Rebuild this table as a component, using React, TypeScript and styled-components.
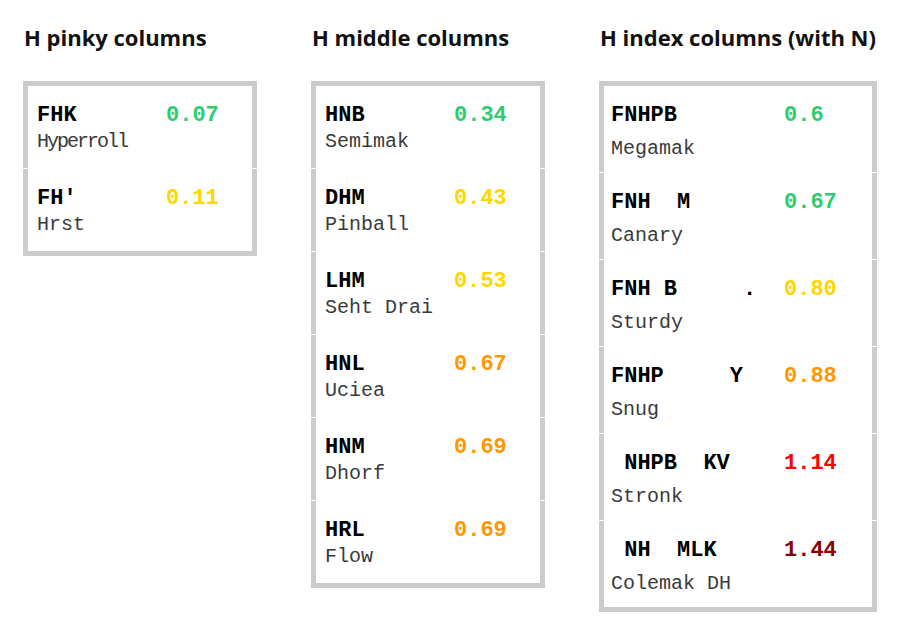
import React from "react";
import styled, { createGlobalStyle } from "styled-components";

const GlobalStyle = createGlobalStyle`
  html, body {
    margin: 0;
    padding: 0;
    background: #fff;
  }
`;

const Page = styled.div`
  display: flex;
  align-items: flex-start;
  padding: 22px 0 0 23px;
`;

const Column = styled.section`
  width: 288px;
  flex-shrink: 0;
`;

const Heading = styled.h2`
  margin: 0 0 29px 1px;
  font-family: "Open Sans", "Noto Sans", sans-serif;
  font-size: 22px;
  font-weight: 700;
  line-height: 30px;
  color: #111;
  white-space: nowrap;
`;

const Card = styled.div<{ $width: number }>`
  width: ${(p) => p.$width}px;
  box-sizing: border-box;
  display: flex;
  flex-direction: column;
  gap: 1px;
  background: #fff;
`;

const Row = styled.div<{ $padLeft: number; $tall: boolean }>`
  border-left: 5px solid #ccc;
  border-right: 5px solid #ccc;
  padding: 18px 0 ${(p) => (p.$tall ? 12 : 15)}px ${(p) => p.$padLeft}px;

  &:first-child {
    border-top: 5px solid #ccc;
  }
  &:last-child {
    border-bottom: 5px solid #ccc;
  }
`;

const Line = styled.div`
  display: flex;
  align-items: baseline;
  height: 24px;
`;

const Code = styled.span<{ $width: number }>`
  width: ${(p) => p.$width}px;
  flex-shrink: 0;
  white-space: pre;
  font-family: "Liberation Mono", "DejaVu Sans Mono", monospace;
  font-size: 22px;
  font-weight: 700;
  line-height: 24px;
  color: #000;
`;

const Score = styled.span<{ $color: string }>`
  font-family: "Liberation Mono", "DejaVu Sans Mono", monospace;
  font-size: 22px;
  font-weight: 700;
  line-height: 24px;
  color: ${(p) => p.$color};
`;

const Name = styled.div<{ $gap: number; $squeeze?: boolean }>`
  margin-top: ${(p) => p.$gap}px;
  font-family: "Liberation Mono", "DejaVu Sans Mono", monospace;
  font-size: 20px;
  font-weight: 400;
  line-height: 22px;
  color: #3a3a3a;
  letter-spacing: ${(p) => (p.$squeeze ? "-2px" : "0")};
  white-space: pre;
`;

const GREEN = "#2ecc71";
const YELLOW = "#ffd700";
const ORANGE = "#ff9800";
const RED = "#ff0000";
const DARK_RED = "#8b0000";

type Layout = { code: string; score: string; color: string; name: string; squeeze?: boolean };

type Group = {
  title: string;
  width: number;
  codeWidth: number;
  padLeft: number;
  tall: boolean;
  layouts: Layout[];
};

const groups: Group[] = [
  {
    title: "H pinky columns",
    width: 234,
    codeWidth: 129,
    padLeft: 9,
    tall: false,
    layouts: [
      { code: "FHK", score: "0.07", color: GREEN, name: "Hyperroll", squeeze: true },
      { code: "FH'", score: "0.11", color: YELLOW, name: "Hrst" },
    ],
  },
  {
    title: "H middle columns",
    width: 234,
    codeWidth: 129,
    padLeft: 9,
    tall: false,
    layouts: [
      { code: "HNB", score: "0.34", color: GREEN, name: "Semimak" },
      { code: "DHM", score: "0.43", color: YELLOW, name: "Pinball" },
      { code: "LHM", score: "0.53", color: YELLOW, name: "Seht Drai" },
      { code: "HNL", score: "0.67", color: ORANGE, name: "Uciea" },
      { code: "HNM", score: "0.69", color: ORANGE, name: "Dhorf" },
      { code: "HRL", score: "0.69", color: ORANGE, name: "Flow" },
    ],
  },
  {
    title: "H index columns (with N)",
    width: 278,
    codeWidth: 173,
    padLeft: 7,
    tall: true,
    layouts: [
      { code: "FNHPB", score: "0.6", color: GREEN, name: "Megamak" },
      { code: "FNH  M", score: "0.67", color: GREEN, name: "Canary" },
      { code: "FNH B     .", score: "0.80", color: YELLOW, name: "Sturdy" },
      { code: "FNHP     Y", score: "0.88", color: ORANGE, name: "Snug" },
      { code: " NHPB  KV", score: "1.14", color: RED, name: "Stronk" },
      { code: " NH  MLK", score: "1.44", color: DARK_RED, name: "Colemak DH" },
    ],
  },
];

export default function App() {
  return (
    <>
      <GlobalStyle />
      <Page>
        {groups.map((g) => (
          <Column key={g.title}>
            <Heading>{g.title}</Heading>
            <Card $width={g.width}>
              {g.layouts.map((l) => (
                <Row key={l.name} $padLeft={g.padLeft} $tall={g.tall}>
                  <Line>
                    <Code $width={g.codeWidth}>{l.code}</Code>
                    <Score $color={l.color}>{l.score}</Score>
                  </Line>
                  <Name $gap={g.tall ? 10 : 3} $squeeze={l.squeeze}>
                    {l.name}
                  </Name>
                </Row>
              ))}
            </Card>
          </Column>
        ))}
      </Page>
    </>
  );
}
